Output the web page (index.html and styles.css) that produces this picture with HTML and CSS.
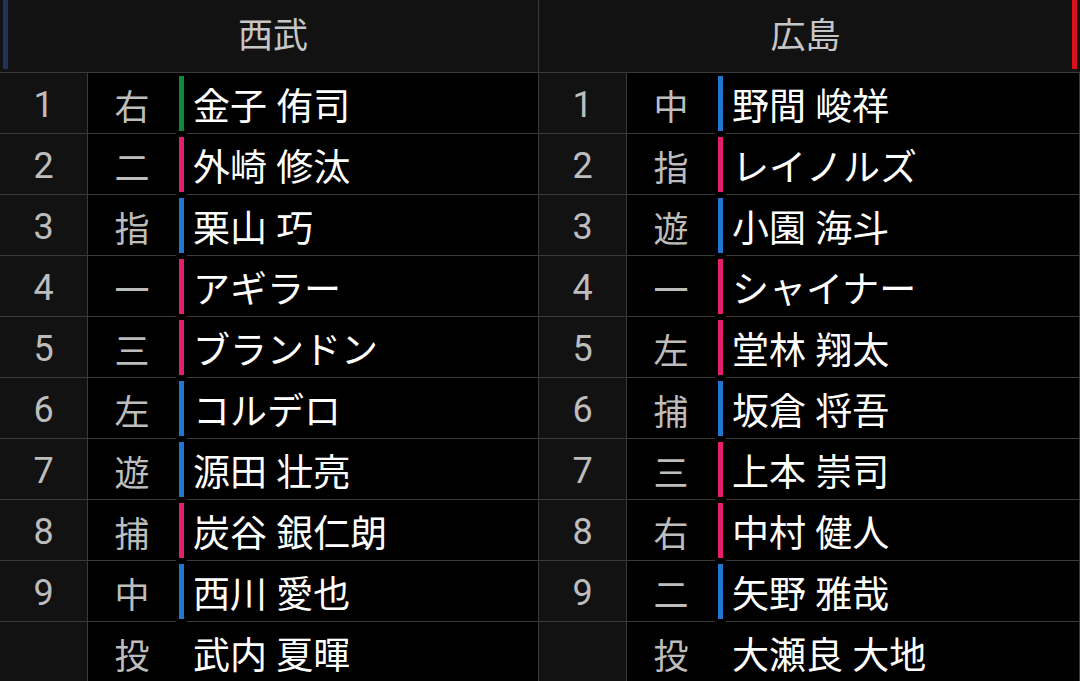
FILE: index.html
```html
<!DOCTYPE html>
<html lang="ja">
<head>
<meta charset="utf-8">
<link rel="stylesheet" href="styles.css">
</head>
<body>
<div class="board">
  <div class="team left">
    <div class="head"><span class="mark navy"></span><span class="tname">西武</span></div>
    <div class="row"><div class="num">1</div><div class="pos">右</div><div class="barcell"><span class="bar green"></span></div><div class="name">金子 侑司</div></div>
    <div class="row"><div class="num">2</div><div class="pos">二</div><div class="barcell"><span class="bar pink"></span></div><div class="name">外崎 修汰</div></div>
    <div class="row"><div class="num">3</div><div class="pos">指</div><div class="barcell"><span class="bar blue"></span></div><div class="name">栗山 巧</div></div>
    <div class="row"><div class="num">4</div><div class="pos">一</div><div class="barcell"><span class="bar pink"></span></div><div class="name">アギラー</div></div>
    <div class="row"><div class="num">5</div><div class="pos">三</div><div class="barcell"><span class="bar pink"></span></div><div class="name">ブランドン</div></div>
    <div class="row"><div class="num">6</div><div class="pos">左</div><div class="barcell"><span class="bar blue"></span></div><div class="name">コルデロ</div></div>
    <div class="row"><div class="num">7</div><div class="pos">遊</div><div class="barcell"><span class="bar blue"></span></div><div class="name">源田 壮亮</div></div>
    <div class="row"><div class="num">8</div><div class="pos">捕</div><div class="barcell"><span class="bar pink"></span></div><div class="name">炭谷 銀仁朗</div></div>
    <div class="row"><div class="num">9</div><div class="pos">中</div><div class="barcell"><span class="bar blue"></span></div><div class="name">西川 愛也</div></div>
    <div class="row"><div class="num"></div><div class="pos">投</div><div class="barcell"></div><div class="name">武内 夏暉</div></div>
  </div>
  <div class="team right">
    <div class="head"><span class="tname">広島</span><span class="mark red"></span></div>
    <div class="row"><div class="num">1</div><div class="pos">中</div><div class="barcell"><span class="bar blue"></span></div><div class="name">野間 峻祥</div></div>
    <div class="row"><div class="num">2</div><div class="pos">指</div><div class="barcell"><span class="bar pink"></span></div><div class="name">レイノルズ</div></div>
    <div class="row"><div class="num">3</div><div class="pos">遊</div><div class="barcell"><span class="bar blue"></span></div><div class="name">小園 海斗</div></div>
    <div class="row"><div class="num">4</div><div class="pos">一</div><div class="barcell"><span class="bar pink"></span></div><div class="name">シャイナー</div></div>
    <div class="row"><div class="num">5</div><div class="pos">左</div><div class="barcell"><span class="bar pink"></span></div><div class="name">堂林 翔太</div></div>
    <div class="row"><div class="num">6</div><div class="pos">捕</div><div class="barcell"><span class="bar blue"></span></div><div class="name">坂倉 将吾</div></div>
    <div class="row"><div class="num">7</div><div class="pos">三</div><div class="barcell"><span class="bar pink"></span></div><div class="name">上本 崇司</div></div>
    <div class="row"><div class="num">8</div><div class="pos">右</div><div class="barcell"><span class="bar pink"></span></div><div class="name">中村 健人</div></div>
    <div class="row"><div class="num">9</div><div class="pos">二</div><div class="barcell"><span class="bar blue"></span></div><div class="name">矢野 雅哉</div></div>
    <div class="row"><div class="num"></div><div class="pos">投</div><div class="barcell"></div><div class="name">大瀬良 大地</div></div>
  </div>
</div>
</body>
</html>
```

FILE: styles.css
```css
* { box-sizing: border-box; }
html, body {
  margin: 0;
  padding: 0;
  background: #000;
}
body {
  font-family: "Roboto", "Noto Sans CJK JP", sans-serif;
  overflow: hidden;
}
.board {
  display: flex;
  width: 1080px;
}
.team {
  display: flex;
  flex-direction: column;
}
.team.left { width: 539px; }
.team.right { width: 541px; }

.head {
  height: 73px;
  display: flex;
  align-items: stretch;
  background: #121212;
  border-bottom: 1px solid #3a3a3a;
}
.team.left .head { border-right: 1px solid #3a3a3a; padding-left: 3px; }
.team.right .head { padding-right: 3px; }
.mark {
  width: 5px;
  height: 69px;
  flex: none;
}
.mark.navy { background: #22305c; }
.mark.red { background: #d8111c; }
.tname {
  flex: 1;
  display: flex;
  align-items: center;
  justify-content: center;
  color: #c6c6c6;
  font-size: 35px;
  padding-bottom: 8px;
}

.row {
  display: flex;
  height: 61px;
}
.num, .pos, .name {
  border-bottom: 1px solid #3a3a3a;
  display: flex;
  align-items: center;
  padding-top: 3px;
}
.num {
  width: 88px;
  flex: none;
  background: #121212;
  border-right: 1px solid #3a3a3a;
  justify-content: center;
  color: #bdbdbd;
  font-size: 36px;
}
.pos {
  width: 88px;
  flex: none;
  justify-content: center;
  color: #bdbdbd;
  font-size: 35px;
}
.barcell {
  width: 11px;
  flex: none;
  padding: 3px 0 0 3px;
}
.bar {
  display: block;
  width: 5px;
  height: 55px;
}
.bar.green { background: #0b8a3a; }
.bar.pink { background: #e2206e; }
.bar.blue { background: #2177d0; }
.name {
  flex: 1;
  padding-left: 6px;
  padding-top: 1px;
  color: #fff;
  font-size: 37px;
  border-right: 1px solid #3a3a3a;
  white-space: nowrap;
}
```
